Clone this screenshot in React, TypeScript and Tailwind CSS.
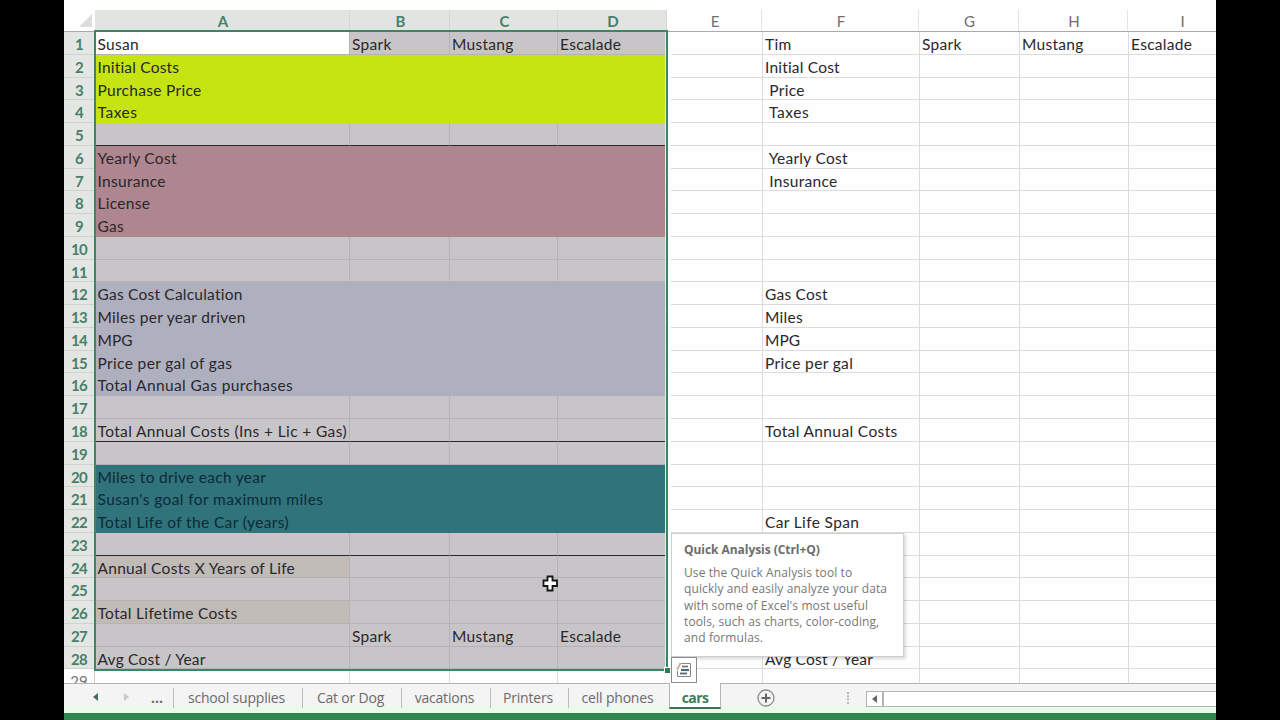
import React from "react";

type RowData = {
  fill?: string;
  firstFill?: string;
  merged?: boolean;
  rule?: boolean;
  left?: string[];
  right?: string[];
  tracking?: string;
};

const MODELS = ["Spark", "Mustang", "Escalade"];
const LIME = "bg-[#c5e412]";
const ROSE = "bg-[#ad868f]";
const SLATE = "bg-[#afb0bf]";
const TEAL = "bg-[#30737a]";

const rows: RowData[] = [
  { firstFill: "bg-white", left: ["Susan", ...MODELS], right: ["Tim", ...MODELS] },
  { fill: LIME, merged: true, left: ["Initial Costs"], right: ["Initial Cost"], tracking: "tracking-[0.2px]" },
  { fill: LIME, merged: true, left: ["Purchase Price"], right: ["\u00a0Price"] },
  { fill: LIME, merged: true, left: ["Taxes"], right: ["\u00a0Taxes"], tracking: "tracking-[0.55px]" },
  { rule: true },
  { fill: ROSE, merged: true, left: ["Yearly Cost"], right: ["\u00a0Yearly Cost"] },
  { fill: ROSE, merged: true, left: ["Insurance"], right: ["\u00a0Insurance"] },
  { fill: ROSE, merged: true, left: ["License"] },
  { fill: ROSE, merged: true, left: ["Gas"] },
  {},
  {},
  { fill: SLATE, merged: true, left: ["Gas Cost Calculation"], right: ["Gas Cost"], tracking: "tracking-[0.22px]" },
  { fill: SLATE, merged: true, left: ["Miles per year driven"], right: ["Miles"] },
  { fill: SLATE, merged: true, left: ["MPG"], right: ["MPG"], tracking: "tracking-[0px]" },
  { fill: SLATE, merged: true, left: ["Price per gal of gas"], right: ["Price per gal"], tracking: "tracking-[0.36px]" },
  { fill: SLATE, merged: true, left: ["Total Annual Gas purchases"], tracking: "tracking-[0.38px]" },
  {},
  { rule: true, left: ["Total Annual Costs (Ins + Lic + Gas)"], right: ["Total Annual Costs"], tracking: "tracking-[0.37px]" },
  {},
  { fill: TEAL, merged: true, left: ["Miles to drive each year"] },
  { fill: TEAL, merged: true, left: ["Susan's goal for maximum miles"], tracking: "tracking-[0.4px]" },
  { fill: TEAL, merged: true, left: ["Total Life of the Car (years)"], right: ["Car Life Span"], tracking: "tracking-[0.36px]" },
  { rule: true },
  { firstFill: "bg-[#c0bbb6]", left: ["Annual Costs X Years of Life"], tracking: "tracking-[0.27px]" },
  {},
  { firstFill: "bg-[#c0bbb6]", left: ["Total Lifetime Costs"] },
  { left: ["", ...MODELS] },
  { left: ["Avg Cost / Year"], right: ["Avg Cost / Year"], tracking: "tracking-[0.22px]" },
];

const leftWidths = ["w-[255px]", "w-[100px]", "w-[108px]", "w-[109px]"];
const rightWidths = ["w-[157px]", "w-[100px]", "w-[109px]", "w-[88px]"];
const headers: [string, string, boolean][] = [
  ["A", "w-[255px]", true],
  ["B", "w-[100px]", true],
  ["C", "w-[108px]", true],
  ["D", "w-[109px]", true],
  ["E", "w-[95px]", false],
  ["F", "w-[157px]", false],
  ["G", "w-[100px]", false],
  ["H", "w-[109px]", false],
  ["I", "w-[108px]", false],
];

const CELL = "shrink-0 overflow-hidden whitespace-nowrap border-b leading-[24px]";

function Row({ data, index }: { data: RowData; index: number }) {
  const left = data.left ?? [];
  const right = data.right ?? [];
  const bottom = data.rule ? "border-b-[#2b262b]" : "border-b-[#b4b2b4]";
  return (
    <div className={`flex h-[22.78px] shrink-0 ${data.tracking ?? "tracking-[0.3px]"}`}>
      <div className="w-[31px] shrink-0 border-b border-r border-b-[#cfd3d0] border-r-[#7fae97] bg-[#e4e6e4] text-center text-[15px] font-bold leading-[24px] tracking-[-0.6px] text-[#47806a]">
        {index}
      </div>
      {data.merged ? (
        <div className={`w-[572px] shrink-0 whitespace-nowrap pl-[2.5px] leading-[24px] ${data.fill} ${data.fill === TEAL ? "text-[#0b2a38]" : ""}`}>
          {left[0]}
        </div>
      ) : (
        leftWidths.map((w, i) => (
          <div
            key={i}
            className={`${CELL} ${w} ${i === 0 ? "pl-[2.5px]" : "pl-[2px]"} border-r border-r-[#b4b2b4] ${bottom} ${i === 0 && data.firstFill ? data.firstFill : "bg-[#c7c5c7]"}`}
          >
            {left[i]}
          </div>
        ))
      )}
      <div className="w-[96px] shrink-0 border-b border-r border-[#dcdcdc]" />
      {rightWidths.map((w, i) => (
        <div key={i} className={`${CELL} ${w} border-r border-[#dcdcdc] pl-[2px]`}>
          {right[i]}
        </div>
      ))}
    </div>
  );
}

function QuickAnalysisButton() {
  return (
    <div className="absolute left-[607px] top-[657px] flex h-[26px] w-[26px] items-center justify-center border border-[#8b8b8b] bg-white">
      <svg width="18" height="18" viewBox="0 0 18 18" fill="none">
        <path d="M5.5 2.5H15.5V15.5H2.5V10" stroke="#8a8585" />
        <path d="M2 9L5.5 2" stroke="#cdb09f" strokeWidth="2" />
        <path d="M7 5.5H13" stroke="#6b6b74" strokeWidth="1.6" />
        <path d="M6 9H14" stroke="#4d6a86" strokeWidth="2.2" />
        <path d="M5 12.5H12" stroke="#55656f" strokeWidth="1.8" />
      </svg>
    </div>
  );
}

function Tooltip() {
  return (
    <div className="absolute left-[607px] top-[533px] h-[124px] w-[233px] whitespace-nowrap border border-[#cfcfcf] bg-white pl-[12px] pt-[8px] font-['Open_Sans',sans-serif] text-[12px] leading-[16.2px] tracking-[0.1px] text-[#777] shadow-[2px_2px_3px_rgba(0,0,0,0.15)]">
      <div className="mb-[7px] text-[12px] font-bold tracking-[-0.05px] text-[#6c6c6c]">Quick Analysis (Ctrl+Q)</div>
      <div>Use the Quick Analysis tool to</div>
      <div>quickly and easily analyze your data</div>
      <div>with some of Excel's most useful</div>
      <div>tools, such as charts, color-coding,</div>
      <div>and formulas.</div>
    </div>
  );
}

function SheetTabs() {
  const tabs: [string, string][] = [
    ["school supplies", "w-[129px]"],
    ["Cat or Dog", "w-[99px]"],
    ["vacations", "w-[89px]"],
    ["Printers", "w-[78px]"],
    ["cell phones", "w-[101px]"],
  ];
  return (
    <div className="flex h-[30px] shrink-0 border-t border-[#b3b3b3] bg-gradient-to-b from-[#f4f4f4] from-70% to-[#e9fbe6] to-85% font-['Open_Sans',sans-serif] text-[14px] text-[#6b6b6b]">
      <div className="flex w-[109px] items-center pb-[3px]">
        <svg className="ml-[29px]" width="5" height="8" viewBox="0 0 5 8"><path d="M5 0V8L0 4Z" fill="#44705c" /></svg>
        <svg className="ml-[26px]" width="5" height="8" viewBox="0 0 5 8"><path d="M0 0V8L5 4Z" fill="#c8c8c8" /></svg>
        <span className="ml-[22px] font-bold">...</span>
      </div>
      {tabs.map(([name, w]) => (
        <div key={name} className={`${w} flex shrink-0 items-start pt-[4px]`}>
          <div className="flex h-[20px] w-full items-center justify-center whitespace-nowrap border-l border-[#bdbdbd] pb-[2px] pr-[3px] tracking-[-0.2px]">{name}</div>
        </div>
      ))}
      <div className="-mt-px flex h-[26px] w-[52px] shrink-0 items-center justify-center border-x border-b-2 border-x-[#b5b5b5] border-b-[#3d7358] bg-white pt-[4px] font-bold tracking-[-0.6px] text-[#3b8059]">cars</div>
      <div className="flex w-[145px] shrink-0">
        <svg className="ml-[35px] mt-[4px]" width="20" height="20" viewBox="0 0 20 20" fill="none">
          <circle cx="10" cy="10" r="8" stroke="#8a8a8a" strokeWidth="1.3" />
          <path d="M10 5.5V14.5M5.5 10H14.5" stroke="#666" strokeWidth="2" />
        </svg>
        <svg className="ml-[70px] mt-[8px]" width="4" height="12" viewBox="0 0 4 12" fill="#b5b5b5">
          <path d="M1 0h2v2H1zM1 3.3h2v2H1zM1 6.6h2v2H1zM1 10h2v2H1z" />
        </svg>
      </div>
      <div className="mt-[7px] flex h-[16px] w-[17px] shrink-0 items-center justify-center border border-[#b4b4b4] bg-white">
        <svg width="5" height="8" viewBox="0 0 5 8"><path d="M5 0V8L0 4Z" fill="#666" /></svg>
      </div>
      <div className="mt-[7px] h-[16px] flex-1 border-y border-l border-[#b4b4b4] bg-white" />
    </div>
  );
}

export default function App() {
  return (
    <div className="flex h-[720px] w-[1280px] justify-center overflow-hidden bg-black">
      <div className="relative flex h-[720px] w-[1152px] flex-col overflow-hidden bg-[#fefefe] font-['Lato',sans-serif] text-[15.5px] text-[#29272b]">
        <div className="flex h-[32px] shrink-0 border-b border-[#a9a9a9] pt-[10px]">
          <div className="flex w-[31px] shrink-0 items-end justify-end pb-[4px] pr-[3px]">
            <svg width="13" height="13" viewBox="0 0 13 13"><path d="M13 0V13H0Z" fill="#dcdcdc" /></svg>
          </div>
          {headers.map(([name, w, selected]) => (
            <div
              key={name}
              className={`${w} h-full shrink-0 border-r pl-[2px] text-center text-[15px] leading-[22px] ${selected ? "border-[#d2d6d3] bg-[#e2e4e2] font-bold text-[#47806a]" : "border-[#e4e4e4] text-[#6f6f6f]"}`}
            >
              {name}
            </div>
          ))}
        </div>
        <div className="flex min-h-0 flex-1 flex-col overflow-hidden">
          {rows.map((row, i) => (
            <Row key={i} data={row} index={i + 1} />
          ))}
          <div className="flex h-[23px] shrink-0">
            <div className="w-[31px] shrink-0 border-r border-[#cfcfcf] text-center text-[15px] leading-[25px] text-[#777]">29</div>
            <div className="w-[255px] shrink-0 border-r border-[#dcdcdc]" />
            <div className="w-[100px] shrink-0 border-r border-[#dcdcdc]" />
            <div className="w-[108px] shrink-0 border-r border-[#dcdcdc]" />
            <div className="w-[205px] shrink-0 border-r border-[#dcdcdc]" />
            <div className="w-[157px] shrink-0 border-r border-[#dcdcdc]" />
            <div className="w-[100px] shrink-0 border-r border-[#dcdcdc]" />
            <div className="w-[109px] shrink-0 border-r border-[#dcdcdc]" />
          </div>
        </div>
        <SheetTabs />
        <div className="h-[7px] shrink-0 bg-[#2f8650]" />

        <div className="pointer-events-none absolute left-[30px] top-[30px] h-[641px] w-[574px] border-2 border-[#3d8564]" />
        <div className="absolute left-[601px] top-[32px] h-[636px] w-px bg-[#e3efe6]" />
        <div className="absolute left-[604px] top-[32px] h-[636px] w-[3px] bg-[#fefefe]" />
        <div className="absolute left-[600px] top-[667px] h-[6px] w-[6px] border-l border-t border-white bg-[#2f7d55]" />
        <Tooltip />
        <QuickAnalysisButton />
        <svg className="absolute left-[478px] top-[575px]" width="17" height="17" viewBox="0 0 17 17">
          <path d="M5.5 1.5H10.5V5.5H15V11H10.5V15.5H5.5V11H1.5V5.5H5.5Z" fill="white" stroke="#161616" strokeWidth="1.8" />
        </svg>
      </div>
    </div>
  );
}
